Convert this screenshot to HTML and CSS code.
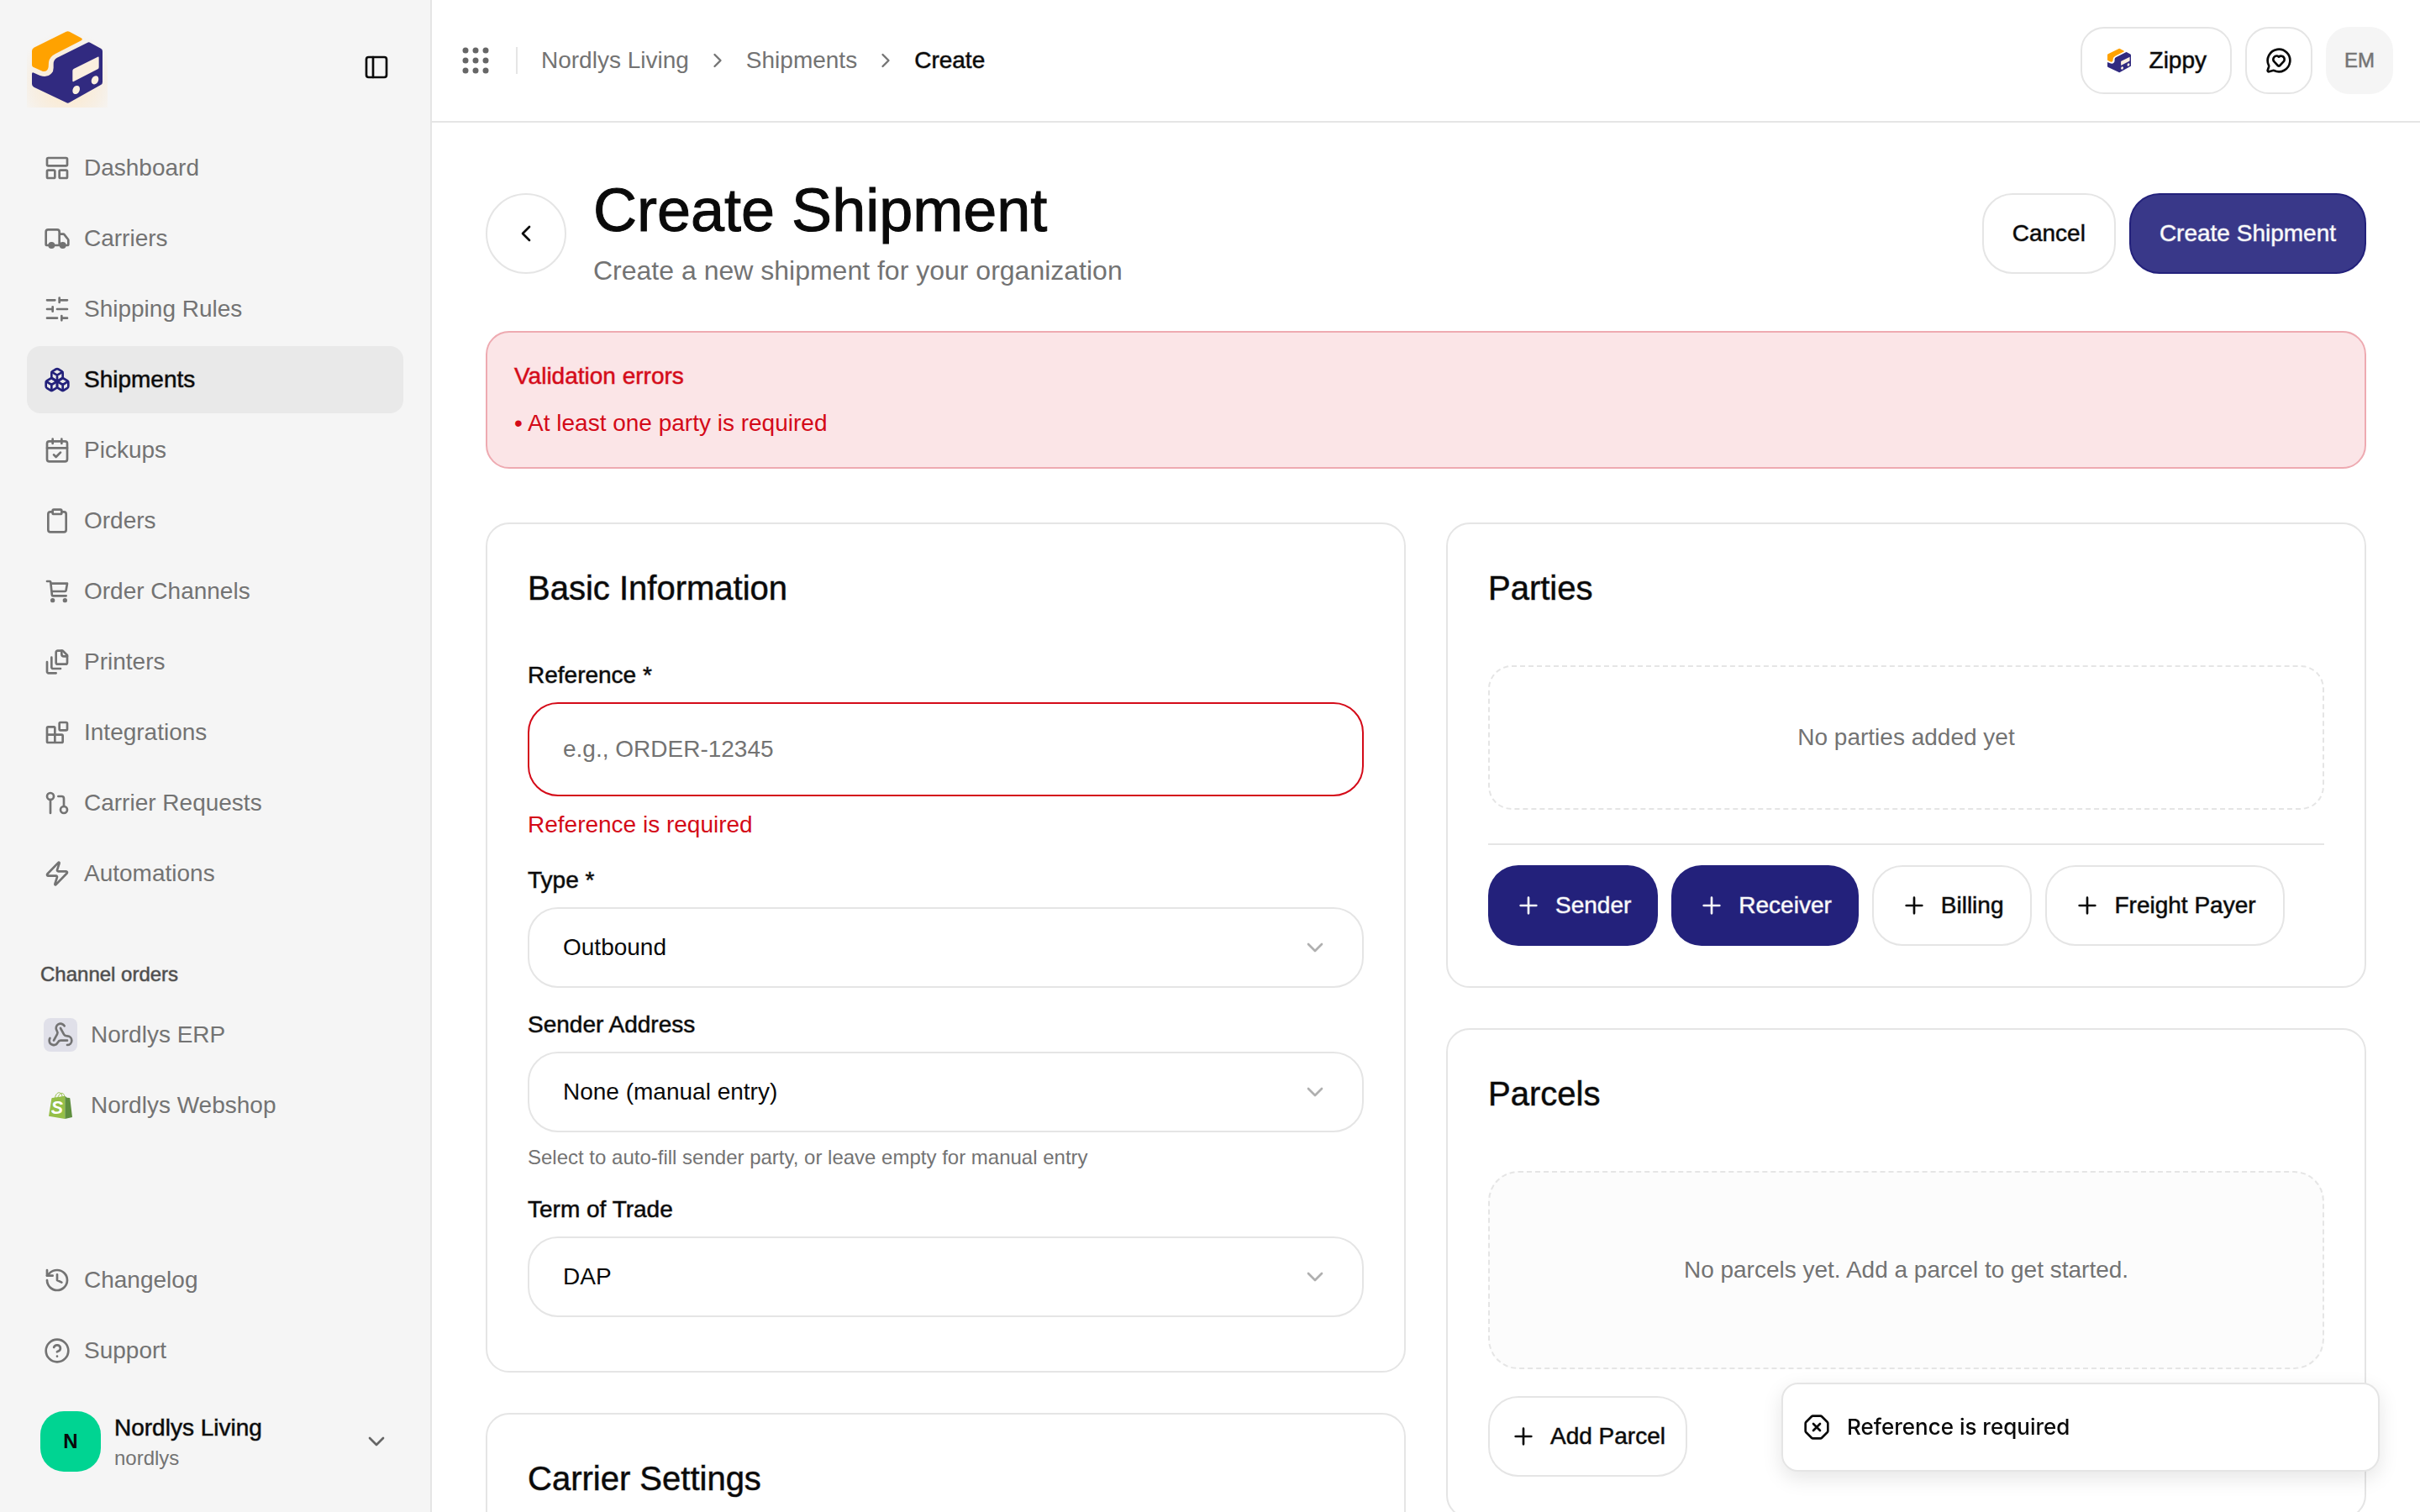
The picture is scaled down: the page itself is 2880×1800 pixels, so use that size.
FILE: index.html
```html
<!DOCTYPE html>
<html lang="en">
<head>
    <meta charset="UTF-8">
    <meta name="viewport" content="width=device-width, initial-scale=1.0">
    <title>Create Shipment</title>
    <link rel="stylesheet" href="styles.css">
</head>

<body>
    <!-- icon sprite -->
    <svg class="sprite" aria-hidden="true">
        <symbol id="logo" viewBox="0 0 288 288">
            <path fill="#ffa200" d="M140 17q6-3 12 0l42 23q7 5 0 9l-92 47q-22 11-24 30l-1 17q-3 18-20 16l-35-16q-4-2-4-8V86q0-8 7-12z" />
            <path fill="#312a80" d="M215 57q6-4 12 0l37 20q6 3 6 10v110q0 7-6 10L152 270q-6 4-12 0L25 215q-7-4-7-11v-36q0-7 7-4l22 10q27 8 41-8 7-7 7-20v-14q0-15 13-22z" />
            <path class="logo-hole" d="M167 150l86-43q4-2 4 3v34q0 5-4 7l-86 44q-4 2-4-3v-35q0-5 4-7z" />
            <ellipse class="logo-hole" cx="176" cy="225" rx="12" ry="16" transform="rotate(28 176 225)" />
            <ellipse class="logo-hole" cx="243" cy="190" rx="12" ry="16" transform="rotate(28 243 190)" />
        </symbol>
        <symbol id="panel-left" viewBox="0 0 24 24"><rect width="18" height="18" x="3" y="3" rx="2" /><path d="M9 3v18" /></symbol>
        <symbol id="dashboard" viewBox="0 0 24 24"><rect width="18" height="7" x="3" y="3" rx="1" /><rect width="7" height="7" x="3" y="14" rx="1" /><rect width="7" height="7" x="14" y="14" rx="1" /></symbol>
        <symbol id="truck" viewBox="0 0 24 24"><path d="M14 18V6a2 2 0 0 0-2-2H4a2 2 0 0 0-2 2v11a1 1 0 0 0 1 1h2M15 18H9M19 18h2a1 1 0 0 0 1-1v-3.65a1 1 0 0 0-.22-.624l-3.48-4.35A1 1 0 0 0 17.52 8H14" /><circle cx="17" cy="18" r="2" fill="currentColor" /><circle cx="7" cy="18" r="2" fill="currentColor" /></symbol>
        <symbol id="sliders" viewBox="0 0 24 24"><path d="M21 4h-7M10 4H3M21 12h-9M8 12H3M21 20h-5M12 20H3M14 2v4M8 10v4M16 18v4" /></symbol>
        <symbol id="boxes" viewBox="0 0 24 24"><path d="M2.97 12.92A2 2 0 0 0 2 14.63v3.24a2 2 0 0 0 .97 1.71l3 1.8a2 2 0 0 0 2.06 0L12 19v-5.5l-5-3-4.03 2.42Z" /><path d="m7 16.5-4.74-2.85M7 16.5l5-3M7 16.5v5.17" /><path d="M12 13.5V19l3.97 2.38a2 2 0 0 0 2.06 0l3-1.8a2 2 0 0 0 .97-1.71v-3.24a2 2 0 0 0-.97-1.71L17 10.5l-5 3Z" /><path d="m17 16.5-5-3M17 16.5l4.74-2.85M17 16.5v5.17" /><path d="M7.97 4.42A2 2 0 0 0 7 6.13v4.37l5 3 5-3V6.13a2 2 0 0 0-.97-1.71l-3-1.8a2 2 0 0 0-2.06 0l-3 1.8Z" /><path d="M12 8 7.26 5.15M12 8l4.74-2.85M12 13.5V8" /></symbol>
        <symbol id="calendar" viewBox="0 0 24 24"><path d="M8 2v4M16 2v4M3 10h18M9 16l2 2 4-4" /><rect width="18" height="18" x="3" y="4" rx="2" /></symbol>
        <symbol id="clipboard" viewBox="0 0 24 24"><rect width="8" height="4" x="8" y="2" rx="1" /><path d="M16 4h2a2 2 0 0 1 2 2v14a2 2 0 0 1-2 2H6a2 2 0 0 1-2-2V6a2 2 0 0 1 2-2h2" /></symbol>
        <symbol id="cart" viewBox="0 0 24 24"><path d="M3 3h2.4a.8.8 0 0 1 .8.7l1.2 11.5a.9.9 0 0 0 .9.8H20M6.4 5H21l-1.1 6.2a1 1 0 0 1-1 .8H7.2" /><circle cx="8" cy="20" r="1" fill="currentColor" /><circle cx="19" cy="20" r="1" fill="currentColor" /></symbol>
        <symbol id="files" viewBox="0 0 24 24"><path d="M21 7h-3a2 2 0 0 1-2-2V2" /><path d="M21 6v6.5c0 .8-.7 1.5-1.5 1.5h-7c-.8 0-1.5-.7-1.5-1.5v-9c0-.8.7-1.5 1.5-1.5H17Z" /><path d="M7 8v8.8c0 .3.2.6.4.8.2.2.5.4.8.4H15" /><path d="M3 12v8.8c0 .3.2.6.4.8.2.2.5.4.8.4H11" /></symbol>
        <symbol id="blocks" viewBox="0 0 24 24"><rect width="7" height="7" x="14" y="3" rx="1" /><path d="M10 21V8a1 1 0 0 0-1-1H4a1 1 0 0 0-1 1v12a1 1 0 0 0 1 1h12a1 1 0 0 0 1-1v-5a1 1 0 0 0-1-1H3" /></symbol>
        <symbol id="requests" viewBox="0 0 24 24"><circle cx="18" cy="18" r="3" /><circle cx="6" cy="6" r="3" /><path d="M13 6h3a2 2 0 0 1 2 2v7M6 9v12" /></symbol>
        <symbol id="zap" viewBox="0 0 24 24"><path d="M4 14a1 1 0 0 1-.78-1.63l9.9-10.2a.5.5 0 0 1 .86.46l-1.92 6.02A1 1 0 0 0 13 10h7a1 1 0 0 1 .78 1.63l-9.9 10.2a.5.5 0 0 1-.86-.46l1.92-6.02A1 1 0 0 0 11 14z" /></symbol>
        <symbol id="webhook" viewBox="0 0 24 24"><path d="M18 16.98h-5.99c-1.1 0-1.95.94-2.48 1.9A4 4 0 0 1 2 17c.01-.7.2-1.4.57-2" /><path d="m6 17 3.13-5.78c.53-.97.1-2.18-.5-3.1a4 4 0 1 1 6.89-4.06" /><path d="m12 6 3.13 5.73C15.66 12.7 16.9 13 18 13a4 4 0 0 1 0 8" /></symbol>
        <symbol id="history" viewBox="0 0 24 24"><path d="M3 12a9 9 0 1 0 9-9 9.75 9.75 0 0 0-6.74 2.74L3 8" /><path d="M3 3v5h5M12 7v5l4 2" /></symbol>
        <symbol id="help" viewBox="0 0 24 24"><circle cx="12" cy="12" r="10" /><path d="M9.09 9a3 3 0 0 1 5.83 1c0 2-3 3-3 3M12 17h.01" /></symbol>
        <symbol id="chevron-down" viewBox="0 0 24 24"><path d="m6 9 6 6 6-6" /></symbol>
        <symbol id="chevron-right" viewBox="0 0 24 24"><path d="m9 18 6-6-6-6" /></symbol>
        <symbol id="chevron-left" viewBox="0 0 24 24"><path d="m15 18-6-6 6-6" /></symbol>
        <symbol id="plus" viewBox="0 0 24 24"><path d="M5 12h14M12 5v14" /></symbol>
        <symbol id="feedback" viewBox="0 0 24 24"><path d="M2.992 16.342a2 2 0 0 1 .094 1.167l-1.065 3.29a1 1 0 0 0 1.236 1.168l3.413-.998a2 2 0 0 1 1.099.092 10 10 0 1 0-4.777-4.719" /><path d="M7.828 13.07A3 3 0 0 1 12 8.764a3 3 0 0 1 5.004 2.224 3 3 0 0 1-.832 2.083l-3.447 3.62a1 1 0 0 1-1.45-.001z" /></symbol>
        <symbol id="octagon-x" viewBox="0 0 24 24"><path d="M2.586 16.726A2 2 0 0 1 2 15.312V8.688a2 2 0 0 1 .586-1.414l4.688-4.688A2 2 0 0 1 8.688 2h6.624a2 2 0 0 1 1.414.586l4.688 4.688A2 2 0 0 1 22 8.688v6.624a2 2 0 0 1-.586 1.414l-4.688 4.688a2 2 0 0 1-1.414.586H8.688a2 2 0 0 1-1.414-.586z" /><path d="m15 9-6 6M9 9l6 6" /></symbol>
        <symbol id="grid-dots" viewBox="0 0 40 40">
            <g fill="currentColor" stroke="none">
                <circle cx="8" cy="8" r="3.5" /><circle cx="20" cy="8" r="3.5" /><circle cx="32" cy="8" r="3.5" />
                <circle cx="8" cy="20" r="3.5" /><circle cx="20" cy="20" r="3.5" /><circle cx="32" cy="20" r="3.5" />
                <circle cx="8" cy="32" r="3.5" /><circle cx="20" cy="32" r="3.5" /><circle cx="32" cy="32" r="3.5" />
            </g>
        </symbol>
    </svg>

    <div class="app">
        <aside class="sidebar">
            <div class="sidebar-header">
                <a href="#" class="brand" aria-label="Home"><svg class="brand-logo"><use href="#logo" /></svg></a>
                <button type="button" class="icon-button" aria-label="Toggle sidebar"><svg class="icon"><use href="#panel-left" /></svg></button>
            </div>

            <nav class="nav">
                <ul>
                    <li><a href="#"><svg class="icon"><use href="#dashboard" /></svg>Dashboard</a></li>
                    <li><a href="#"><svg class="icon"><use href="#truck" /></svg>Carriers</a></li>
                    <li><a href="#"><svg class="icon"><use href="#sliders" /></svg>Shipping Rules</a></li>
                    <li><a href="#" class="active"><svg class="icon"><use href="#boxes" /></svg>Shipments</a></li>
                    <li><a href="#"><svg class="icon"><use href="#calendar" /></svg>Pickups</a></li>
                    <li><a href="#"><svg class="icon"><use href="#clipboard" /></svg>Orders</a></li>
                    <li><a href="#"><svg class="icon"><use href="#cart" /></svg>Order Channels</a></li>
                    <li><a href="#"><svg class="icon"><use href="#files" /></svg>Printers</a></li>
                    <li><a href="#"><svg class="icon"><use href="#blocks" /></svg>Integrations</a></li>
                    <li><a href="#"><svg class="icon"><use href="#requests" /></svg>Carrier Requests</a></li>
                    <li><a href="#"><svg class="icon"><use href="#zap" /></svg>Automations</a></li>
                </ul>

                <h2 class="nav-title">Channel orders</h2>
                <ul>
                    <li><a href="#"><span class="channel-icon tinted"><svg class="icon"><use href="#webhook" /></svg></span>Nordlys ERP</a></li>
                    <li>
                        <a href="#">
                            <span class="channel-icon">
                                <svg class="bag" viewBox="0 0 84 96" aria-hidden="true">
                                    <path fill="none" stroke="#95bf47" stroke-width="3" d="M22 22C25 6 34 0 40 3c6 2 8 8 8 16M32 21C36 8 45 2 50 5c5 2 6 8 6 13" />
                                    <path fill="#95bf47" d="M10 24q0-3 3-3l45-7v82L0 86z" />
                                    <path fill="#5e8e3e" d="M58 14l7 6 9 1q2 0 2 2l8 67-26 6z" />
                                    <text x="8" y="77" class="bag-letter" fill="#fff">S</text>
                                </svg>
                            </span>Nordlys Webshop
                        </a>
                    </li>
                </ul>
            </nav>

            <nav class="nav nav-bottom">
                <ul>
                    <li><a href="#"><svg class="icon"><use href="#history" /></svg>Changelog</a></li>
                    <li><a href="#"><svg class="icon"><use href="#help" /></svg>Support</a></li>
                </ul>
            </nav>

            <button type="button" class="workspace">
                <span class="workspace-avatar">N</span>
                <span class="workspace-text">
                    <span class="workspace-name">Nordlys Living</span>
                    <span class="workspace-slug">nordlys</span>
                </span>
                <svg class="icon"><use href="#chevron-down" /></svg>
            </button>
        </aside>

        <div class="page">
            <header class="topbar">
                <button type="button" class="apps-button" aria-label="Apps"><svg class="icon"><use href="#grid-dots" /></svg></button>
                <span class="separator"></span>
                <nav class="breadcrumb" aria-label="Breadcrumb">
                    <a href="#">Nordlys Living</a>
                    <svg class="icon"><use href="#chevron-right" /></svg>
                    <a href="#">Shipments</a>
                    <svg class="icon"><use href="#chevron-right" /></svg>
                    <span class="current">Create</span>
                </nav>
                <div class="topbar-actions">
                    <button type="button" class="top-button"><svg class="zippy-logo"><use href="#logo" /></svg>Zippy</button>
                    <button type="button" class="top-button square" aria-label="Feedback"><svg class="icon"><use href="#feedback" /></svg></button>
                    <button type="button" class="top-button square user">EM</button>
                </div>
            </header>

            <main class="content">
                <div class="page-header">
                    <a href="#" class="back" aria-label="Back"><svg class="icon"><use href="#chevron-left" /></svg></a>
                    <div class="page-heading">
                        <h1>Create Shipment</h1>
                        <p>Create a new shipment for your organization</p>
                    </div>
                    <div class="button-row">
                        <button type="button" class="btn">Cancel</button>
                        <button type="submit" form="shipment-form" class="btn btn-submit">Create Shipment</button>
                    </div>
                </div>

                <div class="alert" role="alert">
                    <h2>Validation errors</h2>
                    <p>• At least one party is required</p>
                </div>

                <form id="shipment-form" class="columns" novalidate>
                    <div class="column">
                        <section class="card">
                            <h2 class="card-title">Basic Information</h2>
                            <div class="field">
                                <label for="reference">Reference *</label>
                                <input type="text" id="reference" name="reference" placeholder="e.g., ORDER-12345" aria-invalid="true">
                                <p class="error-message">Reference is required</p>
                            </div>
                            <div class="field">
                                <label for="type">Type *</label>
                                <div class="select">
                                    <select id="type" name="type">
                                        <option>Outbound</option>
                                    </select>
                                    <svg class="icon"><use href="#chevron-down" /></svg>
                                </div>
                            </div>
                            <div class="field">
                                <label for="sender">Sender Address</label>
                                <div class="select">
                                    <select id="sender" name="sender">
                                        <option>None (manual entry)</option>
                                    </select>
                                    <svg class="icon"><use href="#chevron-down" /></svg>
                                </div>
                                <p class="hint">Select to auto-fill sender party, or leave empty for manual entry</p>
                            </div>
                            <div class="field">
                                <label for="term">Term of Trade</label>
                                <div class="select">
                                    <select id="term" name="term">
                                        <option>DAP</option>
                                    </select>
                                    <svg class="icon"><use href="#chevron-down" /></svg>
                                </div>
                            </div>
                        </section>

                        <section class="card">
                            <h2 class="card-title">Carrier Settings</h2>
                        </section>
                    </div>

                    <div class="column">
                        <section class="card">
                            <h2 class="card-title">Parties</h2>
                            <div class="empty">No parties added yet</div>
                            <div class="button-row party-buttons">
                                <button type="button" class="btn btn-primary"><svg class="icon"><use href="#plus" /></svg>Sender</button>
                                <button type="button" class="btn btn-primary"><svg class="icon"><use href="#plus" /></svg>Receiver</button>
                                <button type="button" class="btn"><svg class="icon"><use href="#plus" /></svg>Billing</button>
                                <button type="button" class="btn"><svg class="icon"><use href="#plus" /></svg>Freight Payer</button>
                            </div>
                        </section>

                        <section class="card">
                            <h2 class="card-title">Parcels</h2>
                            <div class="empty empty-large">No parcels yet. Add a parcel to get started.</div>
                            <div class="button-row add-row">
                                <button type="button" class="btn btn-add"><svg class="icon"><use href="#plus" /></svg>Add Parcel</button>
                            </div>
                        </section>
                    </div>
                </form>
            </main>
        </div>
    </div>

    <div class="toast" role="status">
        <svg class="icon"><use href="#octagon-x" /></svg>
        Reference is required
    </div>
</body>
</html>
```
FILE: styles.css
```css
* {
    box-sizing: border-box;
}

body {
    font-family: "Liberation Sans", Arial, sans-serif;
    font-size: 28px;
    line-height: 40px;
    color: #0a0a0a;
    background-color: #fff;
    margin: 0;
}

h1,
h2,
p,
ul {
    margin: 0;
    padding: 0;
    font-weight: normal;
}

ul {
    list-style-type: none;
}

a {
    color: inherit;
    text-decoration: none;
}

button,
input,
select {
    font: inherit;
    color: inherit;
    margin: 0;
    cursor: pointer;
}

/* the font has no medium weight, a soft outline stands in for it */
h1,
h2,
label,
.nav a.active,
.workspace-name,
.current,
.top-button,
.btn {
    -webkit-text-stroke: 1px color-mix(in srgb, currentColor 50%, transparent);
}

.sprite {
    display: none;
}

.icon {
    width: 32px;
    height: 32px;
    flex: none;
    fill: none;
    stroke: currentColor;
    stroke-width: 2;
    stroke-linecap: round;
    stroke-linejoin: round;
}

.logo-hole {
    fill: #fbefdf;
}

.app {
    display: flex;
    height: 100vh;
    overflow: hidden;
}

/* sidebar */

.sidebar {
    display: flex;
    flex-direction: column;
    flex: none;
    width: 514px;
    padding: 32px;
    background-color: #f5f5f5;
    border-right: 2px solid #e5e5e5;
}

.sidebar-header {
    display: flex;
    align-items: center;
    justify-content: space-between;
    margin-bottom: 32px;
}

.brand {
    display: block;
    width: 96px;
    height: 96px;
    background: radial-gradient(circle at 50% 70%, #fde8c8 0%, #f7efe4 50%, #f5f5f5 75%);
}

.brand-logo {
    display: block;
    width: 96px;
    height: 96px;
}

.icon-button {
    display: flex;
    align-items: center;
    justify-content: center;
    width: 64px;
    height: 64px;
    padding: 0;
    border: none;
    background: none;
}

.nav ul {
    display: flex;
    flex-direction: column;
    gap: 4px;
}

.nav a {
    display: flex;
    align-items: center;
    gap: 16px;
    height: 80px;
    padding: 0 20px;
    border-radius: 16px;
    color: #737373;
}

.nav a.active {
    background-color: #e9e9e9;
    color: #0a0a0a;
}

.nav a.active .icon {
    color: #23217b;
}

.nav-title {
    margin-top: 48px;
    padding: 0 16px;
    font-size: 24px;
    line-height: 64px;
    color: #4d4d4d;
}

.channel-icon {
    display: flex;
    align-items: center;
    justify-content: center;
    width: 40px;
    height: 40px;
    border-radius: 8px;
}

.channel-icon.tinted {
    background-color: #e0e0e9;
}

.bag {
    width: 28px;
    height: 32px;
}

.bag-letter {
    font-size: 64px;
    font-weight: bold;
    font-style: italic;
}

.nav-bottom {
    margin-top: auto;
}

.workspace {
    display: flex;
    align-items: center;
    gap: 16px;
    margin-top: 16px;
    padding: 16px;
    border: none;
    background: none;
    text-align: left;
}

.workspace-avatar {
    width: 72px;
    height: 72px;
    border-radius: 28px;
    background-color: #00d492;
    font-size: 24px;
    font-weight: bold;
    line-height: 72px;
    text-align: center;
}

.workspace-text {
    display: flex;
    flex-direction: column;
    flex: 1;
}

.workspace-slug {
    font-size: 24px;
    line-height: 32px;
    color: #737373;
}

.workspace .icon {
    color: #666;
}

/* top bar */

.page {
    display: flex;
    flex-direction: column;
    flex: 1;
    min-width: 0;
}

.topbar {
    display: flex;
    align-items: center;
    flex: none;
    height: 146px;
    padding: 0 32px;
    border-bottom: 2px solid #e5e5e5;
}

.apps-button {
    display: flex;
    padding: 0;
    border: none;
    background: none;
    color: #666;
}

.apps-button .icon {
    width: 40px;
    height: 40px;
}

.separator {
    width: 2px;
    height: 32px;
    margin: 0 28px;
    background-color: #e5e5e5;
}

.breadcrumb {
    display: flex;
    align-items: center;
    gap: 20px;
    color: #737373;
}

.breadcrumb .icon {
    width: 28px;
    height: 28px;
}

.current {
    color: #0a0a0a;
}

.topbar-actions {
    display: flex;
    gap: 16px;
    margin-left: auto;
}

.top-button {
    display: flex;
    align-items: center;
    justify-content: center;
    gap: 20px;
    height: 80px;
    padding: 0 28px;
    border: 2px solid #e5e5e5;
    border-radius: 28px;
    background-color: #fff;
}

.top-button.square {
    width: 80px;
    padding: 0;
}

.zippy-logo {
    width: 32px;
    height: 32px;
}

.zippy-logo .logo-hole {
    fill: #fff;
}

.top-button.user {
    border-color: #f5f5f5;
    background-color: #f5f5f5;
    color: #737373;
    font-size: 24px;
}

/* page content */

.content {
    flex: 1;
    min-height: 0;
    padding: 64px;
    overflow-y: auto;
    scrollbar-width: none;
}

.page-header {
    display: flex;
    align-items: center;
    gap: 32px;
    margin-bottom: 48px;
}

.back {
    display: flex;
    align-items: center;
    justify-content: center;
    width: 96px;
    height: 96px;
    border: 2px solid #e5e5e5;
    border-radius: 50%;
}

.page-heading {
    flex: 1;
}

.page-heading h1 {
    margin-bottom: 8px;
    font-size: 72px;
    line-height: 80px;
    -webkit-text-stroke: 1px;
}

.page-heading p {
    font-size: 32px;
    line-height: 48px;
    color: #737373;
}

.button-row {
    display: flex;
    flex-wrap: wrap;
    gap: 16px;
}

.btn {
    display: flex;
    align-items: center;
    justify-content: center;
    gap: 16px;
    height: 96px;
    padding: 0 32px;
    border: 2px solid #e5e5e5;
    border-radius: 36px;
    background-color: #fff;
}

.page-header .btn {
    padding: 0 34px;
}

.btn-primary {
    border: none;
    background-color: #23217b;
    color: #fafafa;
}

.btn-submit {
    border-color: #23217b;
    background-color: #393889;
    color: #fafafa;
}

.btn-add {
    padding: 0 24px;
}

.alert {
    margin-bottom: 64px;
    padding: 32px;
    border: 2px solid #eeaab1;
    border-radius: 28px;
    background-color: #fbe5e7;
    color: #d40a18;
}

.alert h2 {
    margin-bottom: 16px;
    font-size: 28px;
}

.columns {
    display: grid;
    grid-template-columns: 1fr 1fr;
    gap: 48px;
}

.column {
    display: flex;
    flex-direction: column;
    gap: 48px;
}

.card {
    padding: 48px;
    border: 2px solid #e5e5e5;
    border-radius: 28px;
}

.card-title {
    margin-bottom: 56px;
    font-size: 40px;
    line-height: 56px;
}

/* form fields */

.field {
    display: flex;
    flex-direction: column;
    gap: 12px;
}

.field + .field {
    margin-top: 24px;
}

.field:last-child {
    margin-bottom: 16px;
}

.field input,
.field select {
    width: 100%;
    height: 96px;
    padding: 0 40px;
    border: 2px solid #e5e5e5;
    border-radius: 36px;
    background-color: #fff;
    appearance: none;
}

.field input {
    height: 112px;
    cursor: text;
}

.field input::placeholder {
    color: #737373;
}

.field input[aria-invalid="true"] {
    border-color: #d40a18;
}

.select {
    display: grid;
    align-items: center;
}

.select select,
.select .icon {
    grid-area: 1 / 1;
}

.select .icon {
    justify-self: end;
    margin-right: 42px;
    color: #b0b0b0;
    pointer-events: none;
}

.error-message {
    line-height: 44px;
    color: #d40a18;
}

.hint {
    font-size: 24px;
    line-height: 36px;
    color: #737373;
}

.empty {
    display: flex;
    align-items: center;
    justify-content: center;
    height: 172px;
    margin-top: 64px;
    border: 2px dashed #e5e5e5;
    border-radius: 28px;
    color: #737373;
}

.card-title:has(+ .empty) {
    margin-bottom: 0;
}

.empty-large {
    height: 236px;
    border-radius: 36px;
    background-color: #fcfcfc;
}

.party-buttons {
    margin-top: 40px;
    padding-top: 24px;
    border-top: 2px solid #e5e5e5;
}

.add-row {
    margin-top: 32px;
}

/* toast */

.toast {
    position: fixed;
    right: 48px;
    bottom: 48px;
    display: flex;
    align-items: center;
    gap: 20px;
    width: 712px;
    height: 106px;
    padding: 0 24px;
    border: 2px solid #e5e5e5;
    border-radius: 20px;
    background-color: #fff;
    box-shadow: 0 8px 24px rgba(0, 0, 0, 0.1);
    font-family: Inter, "Liberation Sans", sans-serif;
    font-size: 26px;
    font-weight: 500;
}
```
